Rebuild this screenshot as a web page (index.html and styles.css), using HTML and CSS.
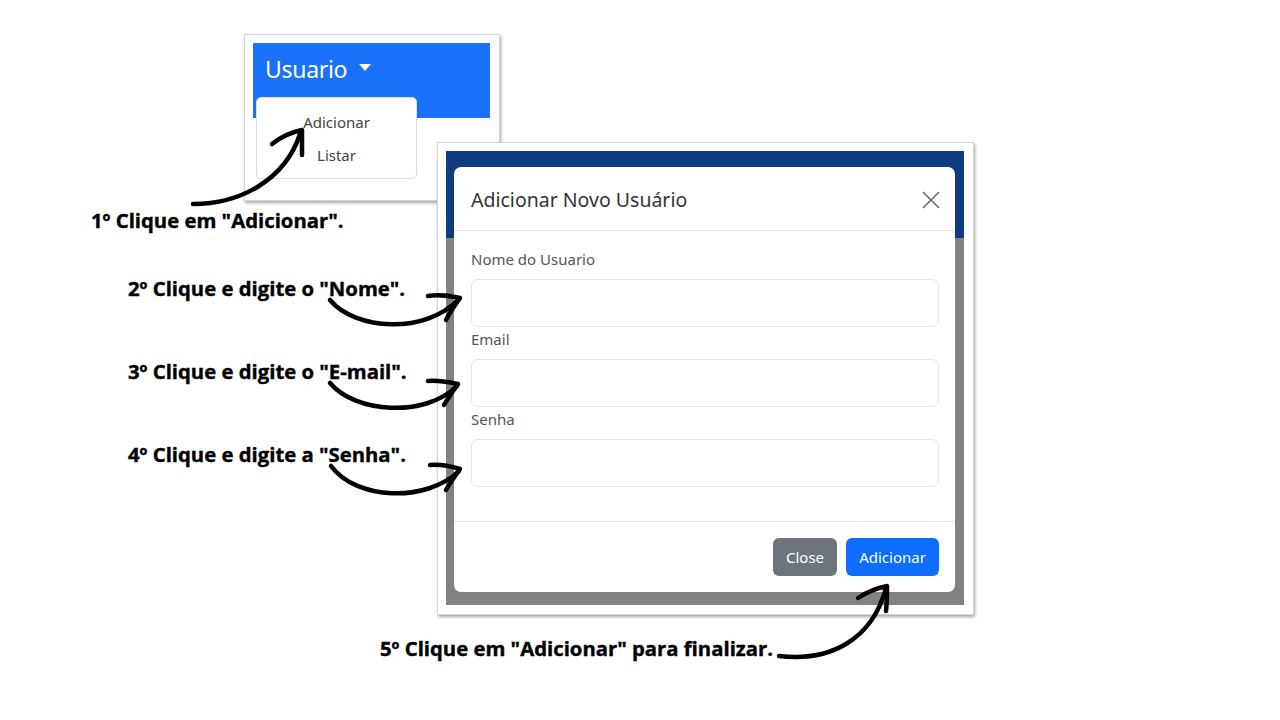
FILE: index.html
```html
<!DOCTYPE html>
<html lang="pt-BR">
<head>
<meta charset="utf-8">
<title>Tutorial - Adicionar Usuário</title>
<link rel="stylesheet" href="styles.css">
</head>
<body>
<main class="canvas">

  <section class="shot shot-menu">
    <div class="shot-inner">
      <nav class="navbar">
        <span class="brand">Usuario</span>
        <span class="caret"></span>
      </nav>
      <ul class="dropdown">
        <li>Adicionar</li>
        <li>Listar</li>
      </ul>
    </div>
  </section>

  <section class="shot shot-modal">
    <div class="backdrop">
      <div class="modal">
        <header class="modal-header">
          <h2 class="modal-title">Adicionar Novo Usuário</h2>
          <svg class="close-x" width="18" height="18" viewBox="0 0 18 18"><path d="M1 1L17 17M17 1L1 17" stroke="#6b6b6b" stroke-width="1.6" fill="none"/></svg>
        </header>
        <div class="modal-body">
          <label class="field">
            <span class="label">Nome do Usuario</span>
            <span class="input"></span>
          </label>
          <label class="field">
            <span class="label">Email</span>
            <span class="input"></span>
          </label>
          <label class="field">
            <span class="label">Senha</span>
            <span class="input"></span>
          </label>
        </div>
        <footer class="modal-footer">
          <button class="btn btn-secondary">Close</button>
          <button class="btn btn-primary">Adicionar</button>
        </footer>
      </div>
    </div>
  </section>

  <p class="caption cap1">1º Clique em "Adicionar".</p>
  <p class="caption cap2">2º Clique e digite o "Nome".</p>
  <p class="caption cap3">3º Clique e digite o "E-mail".</p>
  <p class="caption cap4">4º Clique e digite a "Senha".</p>
  <p class="caption cap5">5º Clique em "Adicionar" para finalizar.</p>

  <svg class="arrows" width="1280" height="720" viewBox="0 0 1280 720">
    <g fill="none" stroke="#000" stroke-width="4.5" stroke-linecap="round" stroke-linejoin="round">
      <path d="M193 204 C 240 204, 285 180, 300 134"/>
      <path d="M272 144 C 282 136, 292 132, 302 130 C 302 140, 302 148, 302 155"/>

      <path d="M330 300 C 355 330, 425 335, 459 299"/>
      <path d="M428 296 C 440 294, 450 296, 460 298 C 455 305, 450 312, 446 320"/>

      <path d="M330 383 C 355 413, 425 418, 457 386"/>
      <path d="M428 381 C 440 380, 448 382, 458 384 C 453 391, 448 398, 444 405"/>

      <path d="M331 466 C 356 500, 426 503, 459 471"/>
      <path d="M430 465 C 442 464, 450 466, 460 469 C 455 476, 450 483, 446 490"/>

      <path d="M779 656 C 830 662, 872 640, 886 588"/>
      <path d="M858 598 C 867 592, 877 588, 887 586 C 887 594, 887 602, 886 611"/>
    </g>
  </svg>
</main>
</body>
</html>
```

FILE: styles.css
```css
* { box-sizing: border-box; }

html, body {
  margin: 0;
  padding: 0;
  background: #ffffff;
}

.canvas {
  position: relative;
  width: 1280px;
  height: 720px;
  overflow: hidden;
  font-family: "Open Sans", "Noto Sans", sans-serif;
}

/* Screenshot frames */
.shot {
  position: absolute;
  background: #fff;
  border: 1px solid #d4d4d4;
  box-shadow: 1px 2px 3px rgba(0, 0, 0, 0.35);
  padding: 8px 9px 9px 8px;
}

.shot-menu {
  left: 244px;
  top: 34px;
  width: 256px;
  height: 167px;
}

.shot-inner {
  position: relative;
  height: 100%;
}

.navbar {
  height: 75px;
  background: #1a72fb;
  display: flex;
  align-items: center;
  gap: 12px;
  padding: 0 0 24px 12px;
}

.brand {
  color: #fff;
  font-size: 23px;
  font-family: "Noto Sans", "Open Sans", sans-serif;
  letter-spacing: -0.3px;
}

.caret {
  width: 0;
  height: 0;
  border-left: 6px solid transparent;
  border-right: 6px solid transparent;
  border-top: 7px solid #fff;
  margin-top: -2px;
}

.dropdown {
  position: absolute;
  left: 3px;
  top: 54px;
  width: 161px;
  height: 82px;
  margin: 0;
  padding: 12px 0 0;
  list-style: none;
  background: #fff;
  border: 1px solid #dcdcdc;
  border-radius: 5px;
  display: flex;
  flex-direction: column;
  align-items: center;
  gap: 9px;
  font-family: "Noto Sans", "Open Sans", sans-serif;
  font-size: 15px;
  color: #444;
}

.dropdown li { line-height: 24px; }

.shot-modal {
  left: 437px;
  top: 142px;
  width: 537px;
  height: 473px;
}

.backdrop {
  height: 100%;
  background: linear-gradient(#0f3b81 0, #0f3b81 87px, #828282 87px, #828282 100%);
  padding: 16px 9px 13px 8px;
}

.modal {
  background: #fff;
  border-radius: 7px;
  height: 100%;
  display: flex;
  flex-direction: column;
  font-family: "Noto Sans", "Open Sans", sans-serif;
}

.modal-header {
  height: 64px;
  border-bottom: 1px solid #e4e4e4;
  display: flex;
  align-items: center;
  justify-content: space-between;
  padding: 2px 15px 0 17px;
}

.modal-title {
  margin: 0;
  font-size: 19.5px;
  font-weight: 400;
  color: #343434;
}

.close-x { display: block; }

.modal-body {
  flex: 1;
  padding: 17px 16px 0 17px;
  display: flex;
  flex-direction: column;
}

.field {
  display: flex;
  flex-direction: column;
}

.label {
  font-size: 15px;
  color: #555;
  line-height: 24px;
  margin-bottom: 8px;
  margin-top: -1px;
}

.input {
  height: 48px;
  border: 1px solid #e6e6e6;
  border-radius: 7px;
  background: #fff;
  margin-bottom: 1px;
}

.modal-footer {
  height: 71px;
  border-top: 1px solid #e4e4e4;
  display: flex;
  justify-content: flex-end;
  align-items: flex-start;
  gap: 9px;
  padding: 16px 16px 0 0;
}

.btn {
  height: 38px;
  border: none;
  border-radius: 6px;
  color: #fff;
  font-family: "Noto Sans", "Open Sans", sans-serif;
  font-size: 15px;
  padding: 0;
}

.btn-secondary { background: #6c757d; width: 64px; }
.btn-primary { background: #0d6efd; width: 93px; }

/* Captions */
.caption {
  position: absolute;
  margin: 0;
  font-family: "Open Sans", sans-serif;
  font-weight: 700;
  font-size: 20.3px;
  line-height: 26px;
  color: #000;
  white-space: nowrap;
  -webkit-text-stroke: 0.4px #000;
}

.cap1 { left: 91px; top: 207px; }
.cap2 { left: 128px; top: 275px; }
.cap3 { left: 128px; top: 358px; }
.cap4 { left: 128px; top: 441px; }
.cap5 { left: 380px; top: 635px; }

.arrows {
  position: absolute;
  left: 0;
  top: 0;
  pointer-events: none;
}
```
